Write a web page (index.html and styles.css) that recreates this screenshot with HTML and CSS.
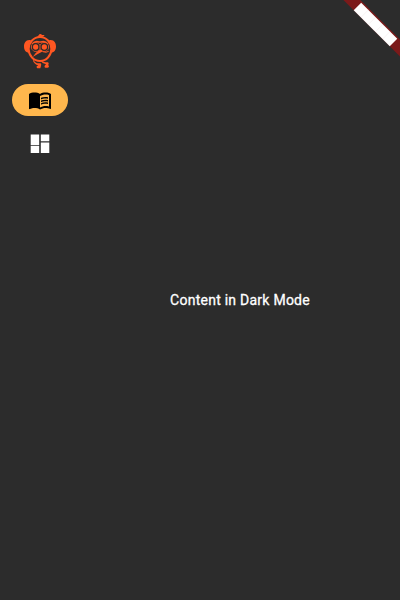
FILE: index.html
```html
<!DOCTYPE html>
<html lang="en">
<head>
<meta charset="utf-8">
<title>Dark Mode</title>
<link rel="stylesheet" href="styles.css">
</head>
<body>
<nav class="rail">
  <svg class="logo" viewBox="0 0 144 138" fill="none" stroke="#ff5722" stroke-width="6">
    <path d="M64 27L70 19Q75 16 78 21L86 21Q84 26 78 27Z" fill="#ff5722" stroke="none"/>
    <ellipse cx="72" cy="63" rx="34" ry="36"/>
    <path d="M43 36C30 34 24 44 24 55S29 75 40 74Q37 64 39 53Q40 43 45 38ZM101 36C114 34 120 44 120 55S115 75 104 74Q107 64 105 53Q104 43 99 38Z" fill="#ff5722" stroke="none"/>
    <path d="M48 48Q57 38 69 42H75Q87 38 96 48" stroke-width="4.5"/>
    <g stroke-width="3"><circle cx="59" cy="57" r="13"/><circle cx="85" cy="57" r="13"/></g>
    <g fill="#ff5722" stroke="#2c2c2c" stroke-width="3.8"><circle cx="59" cy="57" r="9.8"/><circle cx="85" cy="57" r="9.8"/></g>
    <path d="M68 67L76 65L81 70Q67 77 50 87Q58 75 68 67Z" fill="#ff5722" stroke="none"/>
    <path d="M80 71Q91 75 98 70" stroke-width="3"/>
    <path d="M53 95Q55 103 63 106H74Q77 109 75 114L73 121H64Q61 119 62 115L67 112Q54 108 51 98ZM76 97Q79 102 88 103H96Q100 106 97 110L99 117L95 119H88Q84 117 86 113L90 109Q79 107 74 99Z" fill="#ff5722" stroke="none"/>
  </svg>
  <div class="item selected">
    <svg class="icon" viewBox="0 0 24 24"><path d="M21 5c-1.11-.35-2.33-.5-3.5-.5-1.95 0-4.05.4-5.5 1.5-1.45-1.1-3.55-1.5-5.5-1.5S2.45 4.9 1 6v14.65c0 .25.25.5.5.5.1 0 .15-.05.25-.05C3.1 20.45 5.05 20 6.5 20c1.95 0 4.05.4 5.5 1.5 1.35-.85 3.8-1.5 5.5-1.5 1.65 0 3.35.3 4.75 1.05.1.05.15.05.25.05.25 0 .5-.25.5-.5V6c-.6-.45-1.25-.75-2-1zm0 13.5c-1.1-.35-2.3-.5-3.5-.5-1.7 0-4.15.65-5.5 1.5V8c1.35-.85 3.8-1.5 5.5-1.5 1.2 0 2.4.15 3.5.5v11.5z"/><path d="M17.5 10.5c.88 0 1.73.09 2.5.26V9.24c-.79-.15-1.64-.24-2.5-.24-1.7 0-3.24.29-4.5.83v1.66c1.13-.64 2.7-.99 4.5-.99zM13 12.49v1.66c1.13-.64 2.7-.99 4.5-.99.88 0 1.73.09 2.5.26V11.9c-.79-.15-1.64-.24-2.5-.24-1.7 0-3.24.3-4.5.83zM17.5 14.33c-1.7 0-3.24.29-4.5.83v1.66c1.13-.64 2.7-.99 4.5-.99.88 0 1.73.09 2.5.26v-1.52c-.79-.16-1.64-.24-2.5-.24z"/></svg>
  </div>
  <div class="item">
    <svg class="icon light" viewBox="0 0 24 24"><path d="M2.7 13.2h8.5V2.5H2.7v10.7zm0 7.8h8.5v-6.9H2.7V21zm10.1 0h8.5V10.6h-8.5V21zm0-18.5v6.7h8.5V2.5h-8.5z"/></svg>
  </div>
</nav>
<main class="content">Content in Dark Mode</main>
<svg class="ribbon" viewBox="0 0 60 60">
  <g transform="translate(60 0) rotate(45)">
    <path fill="#7b1a1a" d="M-40 28h80v12h-80z"/>
    <path fill="#fff" d="M-25.5 29.4h51v10.6h-51z"/>
    <path stroke="#e8d8d8" stroke-width=".3" d="M-15.3 29.4v10.3M-5.1 29.4v10.3M5.1 29.4v10.3M15.3 29.4v10.3"/>
  </g>
</svg>
</body>
</html>
```
FILE: styles.css
```css
body {
  margin: 0;
  height: 600px;
  display: flex;
  overflow: hidden;
  background: #2c2c2c;
  color: #fff;
  font: 400 14px/20px Roboto, sans-serif;
}
.rail {
  width: 80px;
  display: flex;
  flex-direction: column;
  align-items: center;
  padding-top: 28px;
  box-sizing: border-box;
}
.logo {
  width: 48px;
  height: 46px;
  margin-bottom: 10px;
}
.item {
  width: 56px;
  height: 32px;
  margin-bottom: 12px;
  border-radius: 16px;
  display: flex;
  align-items: center;
  justify-content: center;
}
.selected {
  background: #ffb74d;
}
.icon {
  width: 24px;
  height: 24px;
  fill: #000;
}
.light {
  fill: #fff;
}
.content {
  flex: 1;
  display: flex;
  align-items: center;
  justify-content: center;
  letter-spacing: 0.25px;
  -webkit-text-stroke: 0.3px #fff;
}
.ribbon {
  position: absolute;
  top: 0;
  right: 0;
  width: 60px;
  height: 60px;
}
```
